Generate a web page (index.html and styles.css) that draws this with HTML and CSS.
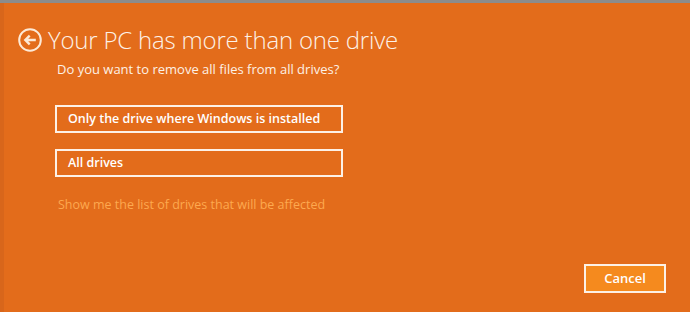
FILE: index.html
```html
<!DOCTYPE html>
<html>
<head>
<meta charset="utf-8">
<link rel="stylesheet" href="styles.css">
</head>
<body>
<div class="frame">
  <div class="panel">
    <div class="header">
      <svg class="back" width="24" height="24" viewBox="0 0 24 24">
        <circle cx="12" cy="12" r="10.8" fill="none" stroke="#fde9d6" stroke-width="2"/>
        <path d="M17.8 12H7.5M11.7 7.6L7.3 12l4.4 4.4" fill="none" stroke="#fde9d6" stroke-width="2.4" stroke-linecap="butt" stroke-linejoin="miter"/>
      </svg>
      <h1 class="title">Your PC has more than one drive</h1>
    </div>
    <div class="content">
      <p class="question">Do you want to remove all files from all drives?</p>
      <button class="choice">Only the drive where Windows is installed</button>
      <button class="choice">All drives</button>
      <a class="link">Show me the list of drives that will be affected</a>
    </div>
    <div class="footer">
      <button class="cancel">Cancel</button>
    </div>
  </div>
</div>
</body>
</html>
```
FILE: styles.css
```css
html, body {
  margin: 0;
  padding: 0;
  background: #8a8a8a;
}
.frame {
  width: 690px;
  height: 312px;
  padding-top: 3px;
  box-sizing: border-box;
  background: #8c8c8c;
}
.panel {
  height: 309px;
  margin-left: 4px;
  background: #e36c1b;
  box-shadow: -4px 0 0 #d8661b;
  display: flex;
  flex-direction: column;
  font-family: "Open Sans", "Noto Sans", sans-serif;
  color: #fff;
  box-sizing: border-box;
}
.header {
  display: flex;
  align-items: center;
  gap: 6px;
  padding: 22px 0 0 14px;
  height: 30px;
}
.back { display: block; }
.title {
  margin: 0;
  font-size: 24px;
  font-weight: 300;
  color: #fdf1e6;
  letter-spacing: -0.2px;
  line-height: 30px;
}
.content {
  display: flex;
  flex-direction: column;
  align-items: flex-start;
  padding-left: 51px;
  flex: 1;
}
.question {
  margin: 6px 0 0 2px;
  font-size: 13px;
  line-height: 17px;
  color: #fdf1e6;
}
.choice {
  width: 288px;
  height: 28px;
  margin-top: 27px;
  border: 2px solid #fdf1e6;
  background: transparent;
  color: #fff;
  font-family: "Open Sans", "Noto Sans", sans-serif;
  font-weight: 600;
  font-size: 12.5px;
  text-align: left;
  padding: 0 0 1px 11px;
}
.choice + .choice { margin-top: 16px; }
.link {
  margin: 19px 0 0 3px;
  font-size: 12.5px;
  color: #fda94f;
  line-height: 17px;
}
.footer {
  display: flex;
  justify-content: flex-end;
  padding: 0 24px 19px 0;
}
.cancel {
  width: 82px;
  height: 29px;
  border: 2px solid #fdf1e6;
  background: #f58a1e;
  color: #fff;
  font-family: "Open Sans", "Noto Sans", sans-serif;
  font-weight: 600;
  font-size: 13px;
  padding: 0 0 1px 0;
}
```
